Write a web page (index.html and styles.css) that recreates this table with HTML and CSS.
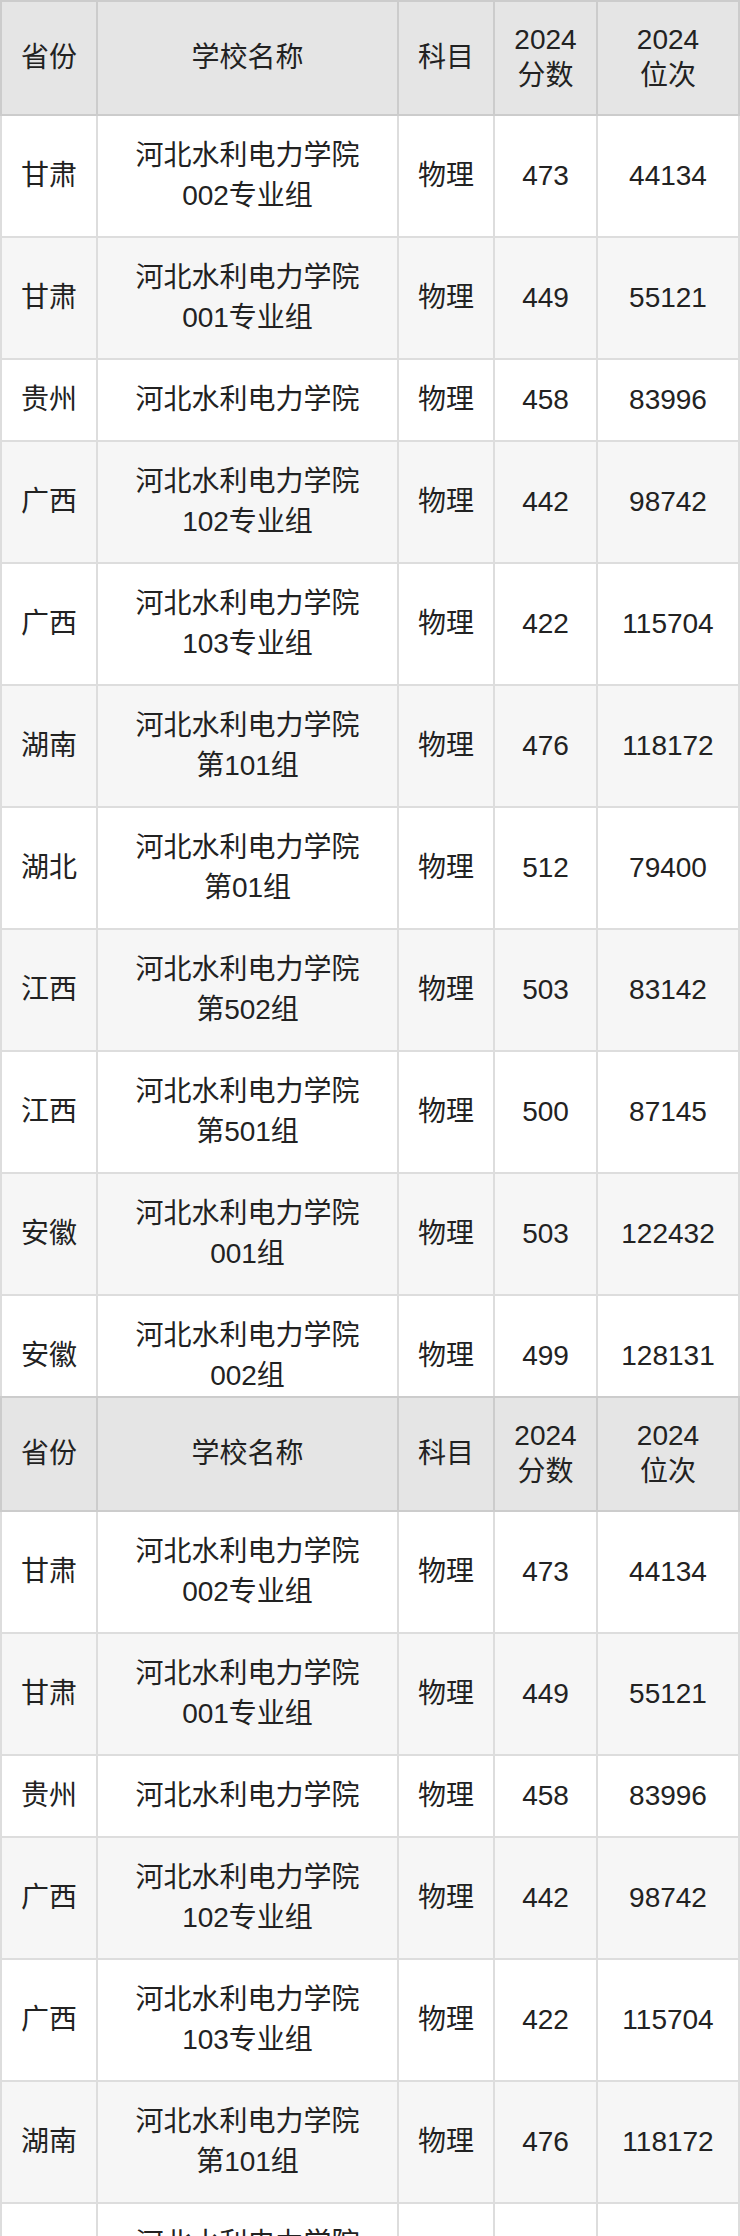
FILE: index.html
```html
<!DOCTYPE html>
<html lang="zh-CN">
<head>
<meta charset="utf-8">
<title>河北水利电力学院 2024 分数与位次</title>
<link rel="stylesheet" href="styles.css">
</head>
<body>
<div class="sheet">
  <div class="part part-clipped">
    <table class="score-table">
      <colgroup>
        <col class="c-prov"><col class="c-school"><col class="c-subj"><col class="c-score"><col class="c-rank">
      </colgroup>
      <thead>
        <tr><th>省份</th><th>学校名称</th><th>科目</th><th>2024<br>分数</th><th>2024<br>位次</th></tr>
      </thead>
      <tbody>
        <tr><td>甘肃</td><td>河北水利电力学院<br>002专业组</td><td>物理</td><td>473</td><td>44134</td></tr>
        <tr><td>甘肃</td><td>河北水利电力学院<br>001专业组</td><td>物理</td><td>449</td><td>55121</td></tr>
        <tr><td>贵州</td><td>河北水利电力学院</td><td>物理</td><td>458</td><td>83996</td></tr>
        <tr><td>广西</td><td>河北水利电力学院<br>102专业组</td><td>物理</td><td>442</td><td>98742</td></tr>
        <tr><td>广西</td><td>河北水利电力学院<br>103专业组</td><td>物理</td><td>422</td><td>115704</td></tr>
        <tr><td>湖南</td><td>河北水利电力学院<br>第101组</td><td>物理</td><td>476</td><td>118172</td></tr>
        <tr><td>湖北</td><td>河北水利电力学院<br>第01组</td><td>物理</td><td>512</td><td>79400</td></tr>
        <tr><td>江西</td><td>河北水利电力学院<br>第502组</td><td>物理</td><td>503</td><td>83142</td></tr>
        <tr><td>江西</td><td>河北水利电力学院<br>第501组</td><td>物理</td><td>500</td><td>87145</td></tr>
        <tr><td>安徽</td><td>河北水利电力学院<br>001组</td><td>物理</td><td>503</td><td>122432</td></tr>
        <tr><td>安徽</td><td>河北水利电力学院<br>002组</td><td>物理</td><td>499</td><td>128131</td></tr>
      </tbody>
    </table>
  </div>
  <div class="part">
    <table class="score-table">
      <colgroup>
        <col class="c-prov"><col class="c-school"><col class="c-subj"><col class="c-score"><col class="c-rank">
      </colgroup>
      <thead>
        <tr><th>省份</th><th>学校名称</th><th>科目</th><th>2024<br>分数</th><th>2024<br>位次</th></tr>
      </thead>
      <tbody>
        <tr><td>甘肃</td><td>河北水利电力学院<br>002专业组</td><td>物理</td><td>473</td><td>44134</td></tr>
        <tr><td>甘肃</td><td>河北水利电力学院<br>001专业组</td><td>物理</td><td>449</td><td>55121</td></tr>
        <tr><td>贵州</td><td>河北水利电力学院</td><td>物理</td><td>458</td><td>83996</td></tr>
        <tr><td>广西</td><td>河北水利电力学院<br>102专业组</td><td>物理</td><td>442</td><td>98742</td></tr>
        <tr><td>广西</td><td>河北水利电力学院<br>103专业组</td><td>物理</td><td>422</td><td>115704</td></tr>
        <tr><td>湖南</td><td>河北水利电力学院<br>第101组</td><td>物理</td><td>476</td><td>118172</td></tr>
        <tr><td>湖北</td><td>河北水利电力学院<br>第01组</td><td>物理</td><td>512</td><td>79400</td></tr>
      </tbody>
    </table>
  </div>
</div>
</body>
</html>
```
FILE: styles.css
```css
html, body {
  margin: 0;
  padding: 0;
  background: #ffffff;
}

body {
  font-family: "Liberation Sans", "Noto Sans CJK SC", sans-serif;
  font-size: 28px;
  color: #222222;
}

.sheet {
  width: 740px;
  height: 2236px;
  overflow: hidden;
}

.part-clipped {
  height: 1396px;
  overflow: hidden;
}

.score-table {
  width: 740px;
  table-layout: fixed;
  border-collapse: separate;
  border-spacing: 0;
}

.c-prov { width: 98px; }
.c-school { width: 301px; }
.c-subj { width: 96px; }
.c-score { width: 103px; }
.c-rank { width: 142px; }

.score-table th,
.score-table td {
  box-sizing: border-box;
  text-align: center;
  vertical-align: middle;
  padding: 20px 8px;
  font-weight: normal;
  white-space: nowrap;
}

.score-table th {
  background: #e5e5e5;
  line-height: 36px;
  border-top: 2px solid #cccccc;
  border-right: 2px solid #cccccc;
  border-bottom: 2px solid #cccccc;
}

.score-table th:first-child {
  border-left: 2px solid #cccccc;
}

.score-table td {
  line-height: 40px;
  border-right: 2px solid #dddddd;
  border-bottom: 2px solid #dddddd;
}

.score-table td:first-child {
  border-left: 2px solid #dddddd;
}

.score-table tbody tr:nth-child(even) td {
  background: #f6f6f6;
}
```
